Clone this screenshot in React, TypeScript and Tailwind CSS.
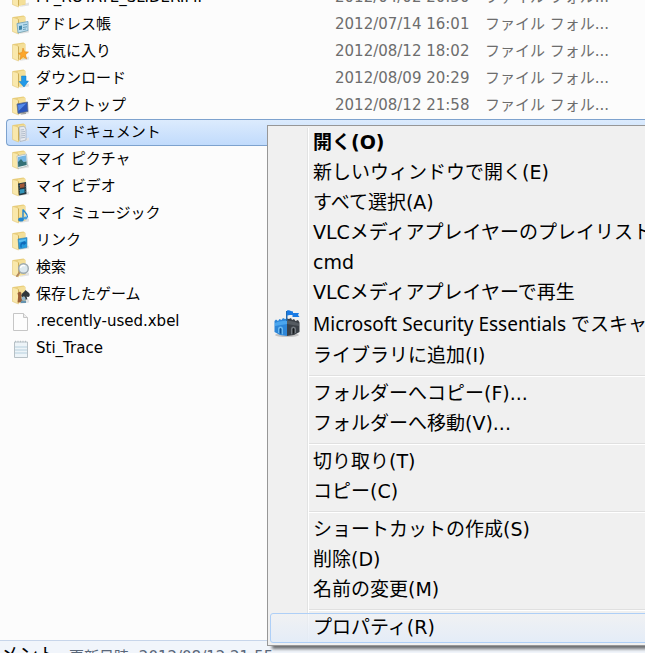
import type { ReactNode } from "react";

type IconKind =
  | "plain"
  | "contact"
  | "star"
  | "download"
  | "desktop"
  | "document"
  | "picture"
  | "video"
  | "music"
  | "link"
  | "search"
  | "games"
  | "file"
  | "text";

interface Entry {
  name: string;
  icon: IconKind;
  date?: string;
  type?: string;
  selected?: boolean;
}

const FOLDER = "ファイル フォル...";

const entries: Entry[] = [
  { name: "PF_ROTATE_SLIDER.MP", icon: "plain", date: "2012/04/02 20:50", type: FOLDER },
  { name: "アドレス帳", icon: "contact", date: "2012/07/14 16:01", type: FOLDER },
  { name: "お気に入り", icon: "star", date: "2012/08/12 18:02", type: FOLDER },
  { name: "ダウンロード", icon: "download", date: "2012/08/09 20:29", type: FOLDER },
  { name: "デスクトップ", icon: "desktop", date: "2012/08/12 21:58", type: FOLDER },
  { name: "マイ ドキュメント", icon: "document", selected: true },
  { name: "マイ ピクチャ", icon: "picture" },
  { name: "マイ ビデオ", icon: "video" },
  { name: "マイ ミュージック", icon: "music" },
  { name: "リンク", icon: "link" },
  { name: "検索", icon: "search" },
  { name: "保存したゲーム", icon: "games" },
  { name: ".recently-used.xbel", icon: "file" },
  { name: "Sti_Trace", icon: "text" },
];

interface MenuEntry {
  label: string;
  bold?: boolean;
  icon?: ReactNode;
  active?: boolean;
}

const menuGroups: MenuEntry[][] = [
  [
    { label: "開く(O)", bold: true },
    { label: "新しいウィンドウで開く(E)" },
    { label: "すべて選択(A)" },
    { label: "VLCメディアプレイヤーのプレイリストに追加" },
    { label: "cmd" },
    { label: "VLCメディアプレイヤーで再生" },
    { label: "Microsoft Security Essentials でスキャン", icon: <CastleIcon /> },
    { label: "ライブラリに追加(I)" },
  ],
  [{ label: "フォルダーへコピー(F)..." }, { label: "フォルダーへ移動(V)..." }],
  [{ label: "切り取り(T)" }, { label: "コピー(C)" }],
  [{ label: "ショートカットの作成(S)" }, { label: "削除(D)" }, { label: "名前の変更(M)" }],
  [{ label: "プロパティ(R)", active: true }],
];

function CastleIcon() {
  return (
    <svg width="28" height="28" viewBox="0 0 28 28" aria-hidden="true">
      <ellipse cx="14" cy="25" rx="12" ry="2" fill="#c4c4c4" />
      <path d="M1.500 11 3 9.500 5 11 6.500 9 8.500 10 10 8 12 9 14 8.500V26L7 25 1.500 22Z" fill="#2d86d8" />
      <path d="M14 8.500 16 9 18 8 19 10 21 9 22.500 11 25 10 26.500 12.500V22L21 25 14 26Z" fill="#3b4046" />
      <path d="M2 13 6 11.500 10 11 14 10.500V14L8 15 2 16Z" fill="#4ba6ee" />
      <path d="M14 10.500 18 11 22 12 26 13.500V16L20 15 14 14Z" fill="#555b61" />
      <path d="M5 23v-4a2.500 2.500 0 0 1 5 0v5.500Z" fill="#6bb9f0" />
      <path d="M6.500 23.500V19.500a1 1.500 0 0 1 2 0V24Z" fill="#0b5399" />
      <path d="M18 24.500V19a2.500 2.500 0 0 1 5 0v4Z" fill="#73797f" />
      <path d="M19.500 24V19.500a1 1.500 0 0 1 2 0v4Z" fill="#15181b" />
      <path d="M13 1h1.500V11H13Z" fill="#2169ae" />
      <path d="M14 .5c3-1 4 1 6 1V3l6 0-1 2 1.500 2h-7V5c-2 0-3 0-5.500.5Z" fill="#1a7be4" />
    </svg>
  );
}

function Overlay({ kind }: { kind: IconKind }) {
  switch (kind) {
    case "contact":
      return (
        <>
          <path d="M5 8.500 16 6.500v9L6 18Z" fill="#b9dced" stroke="#6b9db8" strokeWidth=".8" />
          <path d="m7 11 3-.5v4L7 15Z" fill="#3c83a8" />
          <path d="m11 10 4-.6M11 12.500l4-.7M11 14.500l3-.5" stroke="#5c97b5" strokeWidth=".9" />
        </>
      );
    case "star":
      return <path d="m11 6 1.500 3.800 4 .2-3 2.700 1.200 4.300-3.600-2.300-3.200 3 1-4.200-2.500-2.200 3.600-.8Z" fill="#fda72c" stroke="#dd8114" strokeWidth=".5" />;
    case "download":
      return <path d="M9.500 7H14v5h2.500L12 18l-5-5.500h2.500Z" fill="#2299e8" stroke="#137cc5" strokeWidth=".5" />;
    case "desktop":
      return (
        <>
          <path d="m5 8 10.500-2L16 15.500 6 17.500Z" fill="#2a56bb" stroke="#5f6f86" strokeWidth=".8" />
          <path d="m6 9 8.500-1.800L6.500 15Z" fill="#548bea" />
          <path d="m9 17.500 5-1v1.500l-5 .6Z" fill="#9b9b9b" />
        </>
      );
    case "document":
      return (
        <>
          <path d="m7 4 5-.8 2 2.800v11L8 18.500Z" fill="#e6eaf0" stroke="#9eabba" strokeWidth=".7" />
          <path d="m8.500 7 3.500-.4M8.500 9l4.500-.5M8.500 11l4.500-.5M8.500 13l4.500-.6M8.500 15l4.500-.7" stroke="#9aa8ba" strokeWidth=".7" />
        </>
      );
    case "picture":
      return (
        <>
          <path d="m5 6 9.500-2L15.500 16 6 18.500Z" fill="#f3f7f9" stroke="#a8b4b9" strokeWidth=".7" />
          <path d="m6 7 8-1.700.5 5.700L6 14Z" fill="#74b6e4" />
          <path d="m6 12 3-3 2.500 3 3-.8.200 3.800L6.200 17Z" fill="#347177" />
        </>
      );
    case "video":
      return (
        <>
          <path d="m6 6.500 8-1.500L14.500 17 7 18.500Z" fill="#263942" />
          <path d="m8 7 4.500-.7v4L8 11Z" fill="#a35836" />
          <path d="m8 12.500 4.500-.7v4l-4.500 1Z" fill="#3295ba" />
          <path d="M7.200 8v9M13.700 6.500V16" stroke="#6f8791" strokeWidth=".7" strokeDasharray="1 1.500" />
        </>
      );
    case "music":
      return (
        <>
          <ellipse cx="9" cy="15.500" rx="2.800" ry="2" fill="#2286d0" />
          <ellipse cx="13.500" cy="14" rx="2" ry="1.500" fill="#49a0dc" />
          <path d="M11 15.500V5.500c1 2.500 4.500 3 4.500 8" stroke="#2286d0" strokeWidth="1.400" fill="none" />
        </>
      );
    case "link":
      return (
        <>
          <path d="m6 8 9-1.500v10L7 18Z" fill="#279cdf" stroke="#3d87b5" strokeWidth=".6" />
          <path d="M8.500 16.500c-.8-4 .5-5.500 3-5.500V9.500l3 2.500-3 2.500V13c-1.500 0-2.500 1-1.500 3.500Z" fill="#1269b8" />
          <path d="m7 9 7-1v1.500l-7 2Z" fill="#5dbdf0" />
        </>
      );
    case "search":
      return (
        <>
          <path d="m8 14-3 4" stroke="#b38a62" strokeWidth="2" strokeLinecap="round" />
          <circle cx="11.500" cy="10.500" r="4.800" fill="#dce8ee" stroke="#9da9af" strokeWidth="1.400" />
          <path d="M8.500 10c.5-2.500 3-3 4.500-2" stroke="#fff" strokeWidth="1.300" fill="none" />
        </>
      );
    case "games":
      return (
        <>
          <path d="M13.500 5c3 3 5 3 4 6-.8 1.500-2 1-3 .5l1 3h-4l1-3c-2 1-4 .5-3-2 1-2 3-2.500 4-4.500Z" fill="#31373c" />
          <path d="M5.500 8 8 6.500 9.500 8 9 11l2 6-5.500.5.700-6.500Z" fill="#9a5c36" />
          <circle cx="11.500" cy="13.500" r="2" fill="#93b8cd" />
          <path d="M9.500 15.500h4.500V18H8.500Z" fill="#6593b0" />
        </>
      );
    default:
      return null;
  }
}

function EntryIcon({ kind }: { kind: IconKind }) {
  if (kind === "file" || kind === "text") {
    return (
      <svg width="18" height="20" viewBox="0 0 18 20" className="shrink-0" aria-hidden="true">
        {kind === "file" ? (
          <>
            <path d="M1.500 1.500h10l4 4v13h-14Z" fill="#fdfdfd" stroke="#c6c6c6" />
            <path d="M11.500 1.500v4h4" fill="#eee" stroke="#c5c5c5" />
          </>
        ) : (
          <>
            <path d="M2.500 3h13v15.500h-13Z" fill="#edf4f8" stroke="#b7c0c5" />
            <path d="M3 8h12M3 11h12M3 14h12" stroke="#b7d0de" />
            <path d="M3 2.500h12" stroke="#b4bec3" strokeWidth="1.500" strokeDasharray="1 1.500" />
          </>
        )}
      </svg>
    );
  }
  return (
    <svg width="18" height="20" viewBox="0 0 18 20" className="shrink-0" aria-hidden="true">
      <path d="M12 16 17 14.500v3L7 19Z" fill="#e2e2e2" />
      <path d="M1 2 11.500.5 13.500 2v14.500L6 18 1 16Z" fill="#e9ce7c" />
      <path d="m6 2.500 7-1V16l-6.500 2Z" fill="#f4df98" />
      <path d="M.5 2.500 5 3.500 6.500 5v14L.5 16.500Z" fill="#f9e8ab" stroke="#e1c677" strokeWidth=".6" />
      <path d="M6.500 4.500v13" stroke="#cdae57" strokeWidth="1" />
      <Overlay kind={kind} />
    </svg>
  );
}

function FileList() {
  return (
    <table className="-mt-4 ml-1.5 w-full table-fixed border-separate border-spacing-0 text-left">
      <colgroup>
        <col className="w-[329px]" />
        <col className="w-[150px]" />
        <col />
      </colgroup>
      <tbody>
        {entries.map((e) => {
          const cell = e.selected ? "border-y border-[#7da2ce] bg-linear-to-b from-[#dcebfd] to-[#c1dbfc]" : "";
          return (
            <tr key={e.name} className="h-[27px] whitespace-nowrap text-[#6d6d6d]">
              <td className={`p-0 ${cell} ${e.selected ? "rounded-l-sm border-l" : ""}`}>
                <div className={`flex items-center gap-1.5 leading-[25px] text-black ${e.selected ? "pl-[5px]" : "pl-1.5"}`}>
                  <EntryIcon kind={e.icon} />
                  <span>{e.name}</span>
                </div>
              </td>
              <td className={`p-0 leading-[25px] ${cell}`}>{e.date}</td>
              <td className={`p-0 leading-[25px] ${cell}`}>{e.type}</td>
            </tr>
          );
        })}
      </tbody>
    </table>
  );
}

function MenuItem({ item }: { item: MenuEntry }) {
  return (
    <button
      type="button"
      role="menuitem"
      className={`relative flex w-full items-center rounded-[3px] border text-left ${
        item.icon ? "h-[33px] font-['Noto_Sans','Noto_Sans_CJK_JP',sans-serif]" : "h-[30px]"
      } ${item.active ? "border-[#aecff7] bg-linear-to-b from-[#f0f2f5]/60 to-[#e3ecf8]/90" : "border-transparent"}`}
    >
      <span className="flex w-[42px] shrink-0 pb-0.5 pl-0.5">{item.icon}</span>
      <span className={`pb-0.5 leading-6 ${item.bold ? "font-bold" : ""}`}>{item.label}</span>
    </button>
  );
}

function ContextMenu() {
  return (
    <div
      role="menu"
      className="absolute top-[125px] left-[267px] w-[480px] border border-[#979797] bg-[#f0f0f0] p-0.5 text-[19px] whitespace-nowrap text-black shadow-[4px_4px_3px_-1px_rgba(0,0,0,0.55)]"
    >
      <div className="absolute inset-y-0.5 left-[39px] w-0.5 border-r border-l border-r-white border-l-[#e2e3e3]" />
      {menuGroups.map((group, i) => (
        <div key={group[0].label}>
          {i > 0 && <div role="separator" className="mt-1 mb-0.5 ml-[39px] h-0.5 border-t border-b border-t-[#e0e0e0] border-b-white" />}
          {group.map((item) => (
            <MenuItem key={item.label} item={item} />
          ))}
        </div>
      ))}
    </div>
  );
}

export default function App() {
  return (
    <div className="relative flex h-screen flex-col overflow-hidden bg-[#fcfcfc] font-['DejaVu_Sans','Noto_Sans_CJK_JP',sans-serif] text-[15px]">
      <main className="min-h-0 flex-1 overflow-hidden">
        <FileList />
      </main>
      <footer className="flex h-[13px] shrink-0 gap-3 overflow-hidden border-t border-[#c7d5ea] bg-[#f1f5fb] whitespace-nowrap">
        <span className="text-[19px] leading-7 text-black">メント</span>
        <span className="leading-8 text-[#5a6779]">更新日時: 2012/08/12 21:55</span>
      </footer>
      <ContextMenu />
    </div>
  );
}
